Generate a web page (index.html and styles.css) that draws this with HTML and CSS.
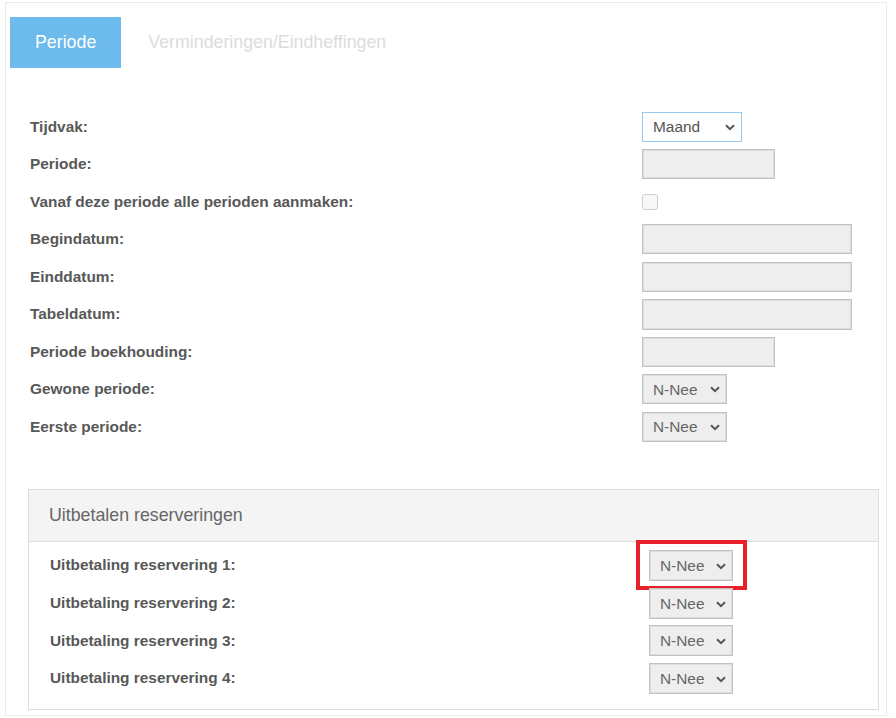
FILE: index.html
```html
<!DOCTYPE html>
<html lang="nl">
<head>
<meta charset="utf-8">
<title>Periode</title>
<link rel="stylesheet" href="styles.css">
</head>
<body>
<div class="page">
  <div class="tabs">
    <div class="tab active">Periode</div>
    <div class="tab">Verminderingen/Eindheffingen</div>
  </div>

  <div class="form">
    <div class="row">
      <label class="lbl">Tijdvak:</label>
      <span class="sel focus w100">
        <select><option>Maand</option></select>
        <svg class="chev" viewBox="0 0 10 7"><path d="M1 1.2 L5 5.2 L9 1.2" fill="none" stroke="#555" stroke-width="2"/></svg>
      </span>
    </div>
    <div class="row">
      <label class="lbl">Periode:</label>
      <input class="inp w133" type="text" disabled>
    </div>
    <div class="row">
      <label class="lbl">Vanaf deze periode alle perioden aanmaken:</label>
      <input class="chk" type="checkbox" disabled>
    </div>
    <div class="row">
      <label class="lbl">Begindatum:</label>
      <input class="inp w210" type="text" disabled>
    </div>
    <div class="row">
      <label class="lbl">Einddatum:</label>
      <input class="inp w210" type="text" disabled>
    </div>
    <div class="row">
      <label class="lbl">Tabeldatum:</label>
      <input class="inp w210 h31" type="text" disabled>
    </div>
    <div class="row">
      <label class="lbl">Periode boekhouding:</label>
      <input class="inp w133" type="text" disabled>
    </div>
    <div class="row">
      <label class="lbl">Gewone periode:</label>
      <span class="sel dis w85">
        <select disabled><option>N-Nee</option></select>
        <svg class="chev" viewBox="0 0 10 7"><path d="M1 1.2 L5 5.2 L9 1.2" fill="none" stroke="#555" stroke-width="2"/></svg>
      </span>
    </div>
    <div class="row">
      <label class="lbl">Eerste periode:</label>
      <span class="sel dis w85">
        <select disabled><option>N-Nee</option></select>
        <svg class="chev" viewBox="0 0 10 7"><path d="M1 1.2 L5 5.2 L9 1.2" fill="none" stroke="#555" stroke-width="2"/></svg>
      </span>
    </div>
  </div>

  <div class="panel">
    <div class="panel-head">Uitbetalen reserveringen</div>
    <div class="panel-body">
      <div class="prow">
        <label class="lbl">Uitbetaling reservering 1:</label>
        <span class="sel dis w84 marked">
          <select disabled><option>N-Nee</option></select>
          <svg class="chev" viewBox="0 0 10 7"><path d="M1 1.2 L5 5.2 L9 1.2" fill="none" stroke="#555" stroke-width="2"/></svg>
          <span class="mark"></span>
        </span>
      </div>
      <div class="prow">
        <label class="lbl">Uitbetaling reservering 2:</label>
        <span class="sel dis w84">
          <select disabled><option>N-Nee</option></select>
          <svg class="chev" viewBox="0 0 10 7"><path d="M1 1.2 L5 5.2 L9 1.2" fill="none" stroke="#555" stroke-width="2"/></svg>
        </span>
      </div>
      <div class="prow">
        <label class="lbl">Uitbetaling reservering 3:</label>
        <span class="sel dis w84">
          <select disabled><option>N-Nee</option></select>
          <svg class="chev" viewBox="0 0 10 7"><path d="M1 1.2 L5 5.2 L9 1.2" fill="none" stroke="#555" stroke-width="2"/></svg>
        </span>
      </div>
      <div class="prow">
        <label class="lbl">Uitbetaling reservering 4:</label>
        <span class="sel dis w84">
          <select disabled><option>N-Nee</option></select>
          <svg class="chev" viewBox="0 0 10 7"><path d="M1 1.2 L5 5.2 L9 1.2" fill="none" stroke="#555" stroke-width="2"/></svg>
        </span>
      </div>
    </div>
  </div>
</div>
</body>
</html>
```

FILE: styles.css
```css
* { box-sizing: border-box; }

html, body {
  margin: 0;
  padding: 0;
  background: #ffffff;
  font-family: "Liberation Sans", Arial, sans-serif;
}

.page {
  margin: 2px 9px 0 5px;
  height: 714px;
  border: 1px solid #ececec;
  padding: 14px 7px 0 4px;
}

.tabs {
  display: flex;
  gap: 2px;
  height: 51px;
}

.tab {
  display: flex;
  align-items: center;
  padding: 0 25px;
  font-size: 17.8px;
  color: #dcdcdc;
}

.tab.active {
  background: #6cbbec;
  color: #ffffff;
}

.form {
  margin-top: 40px;
  padding-left: 20px;
}

.row {
  display: grid;
  grid-template-columns: 612px auto;
  align-items: center;
  height: 37.5px;
}

.lbl {
  font-size: 15.4px;
  font-weight: bold;
  color: #585858;
}

.inp {
  height: 30px;
  border: 1px solid #c2c2c2;
  box-shadow: inset 0 0 0 1px #dedede;
  background: #eeeeee;
  padding: 0;
  margin: 0;
}
.h31 { height: 31px; }
.w133 { width: 133px; }
.w210 { width: 210px; }

.chk {
  -webkit-appearance: none;
  appearance: none;
  width: 16px;
  height: 16px;
  margin: 0;
  border: 1px solid #cfcfcf;
  border-radius: 3px;
  background: #f8f8f8;
}

.sel {
  position: relative;
  display: inline-block;
  height: 30px;
}
.sel select {
  -webkit-appearance: none;
  appearance: none;
  width: 100%;
  height: 100%;
  margin: 0;
  padding: 0 0 0 10px;
  font-family: "Liberation Sans", Arial, sans-serif;
  font-size: 15.4px;
  color: #555555;
  opacity: 1;
}
.sel.focus select {
  background: #ffffff;
  border: 1px solid #93c8f1;
  outline: none;
}
.sel.dis select {
  background: #eeeeee;
  border: 1px solid #c2c2c2;
  box-shadow: inset 0 0 0 1px #dedede;
  color: #666666;
}
.chev {
  position: absolute;
  right: 7px;
  top: 12px;
  width: 10px;
  height: 7px;
  pointer-events: none;
}
.w100 { width: 100px; }
.w85 { width: 85px; }
.w84 { width: 84px; height: 31px; }
.w84 .chev { top: 13px; }

.panel {
  margin-top: 43px;
  margin-left: 18px;
  border: 1px solid #dddddd;
  height: 221px;
}

.panel-head {
  height: 52px;
  background: #f4f4f4;
  border-bottom: 1px solid #dddddd;
  display: flex;
  align-items: center;
  padding-left: 20px;
  font-size: 17.8px;
  color: #666666;
}

.panel-body {
  padding: 5px 0 0 21px;
}

.prow {
  display: grid;
  grid-template-columns: 599px auto;
  align-items: center;
  height: 37.7px;
}

.mark {
  position: absolute;
  left: -13px;
  top: -10px;
  right: -14px;
  bottom: -9px;
  border: 4px solid #e8202a;
  pointer-events: none;
}
```
